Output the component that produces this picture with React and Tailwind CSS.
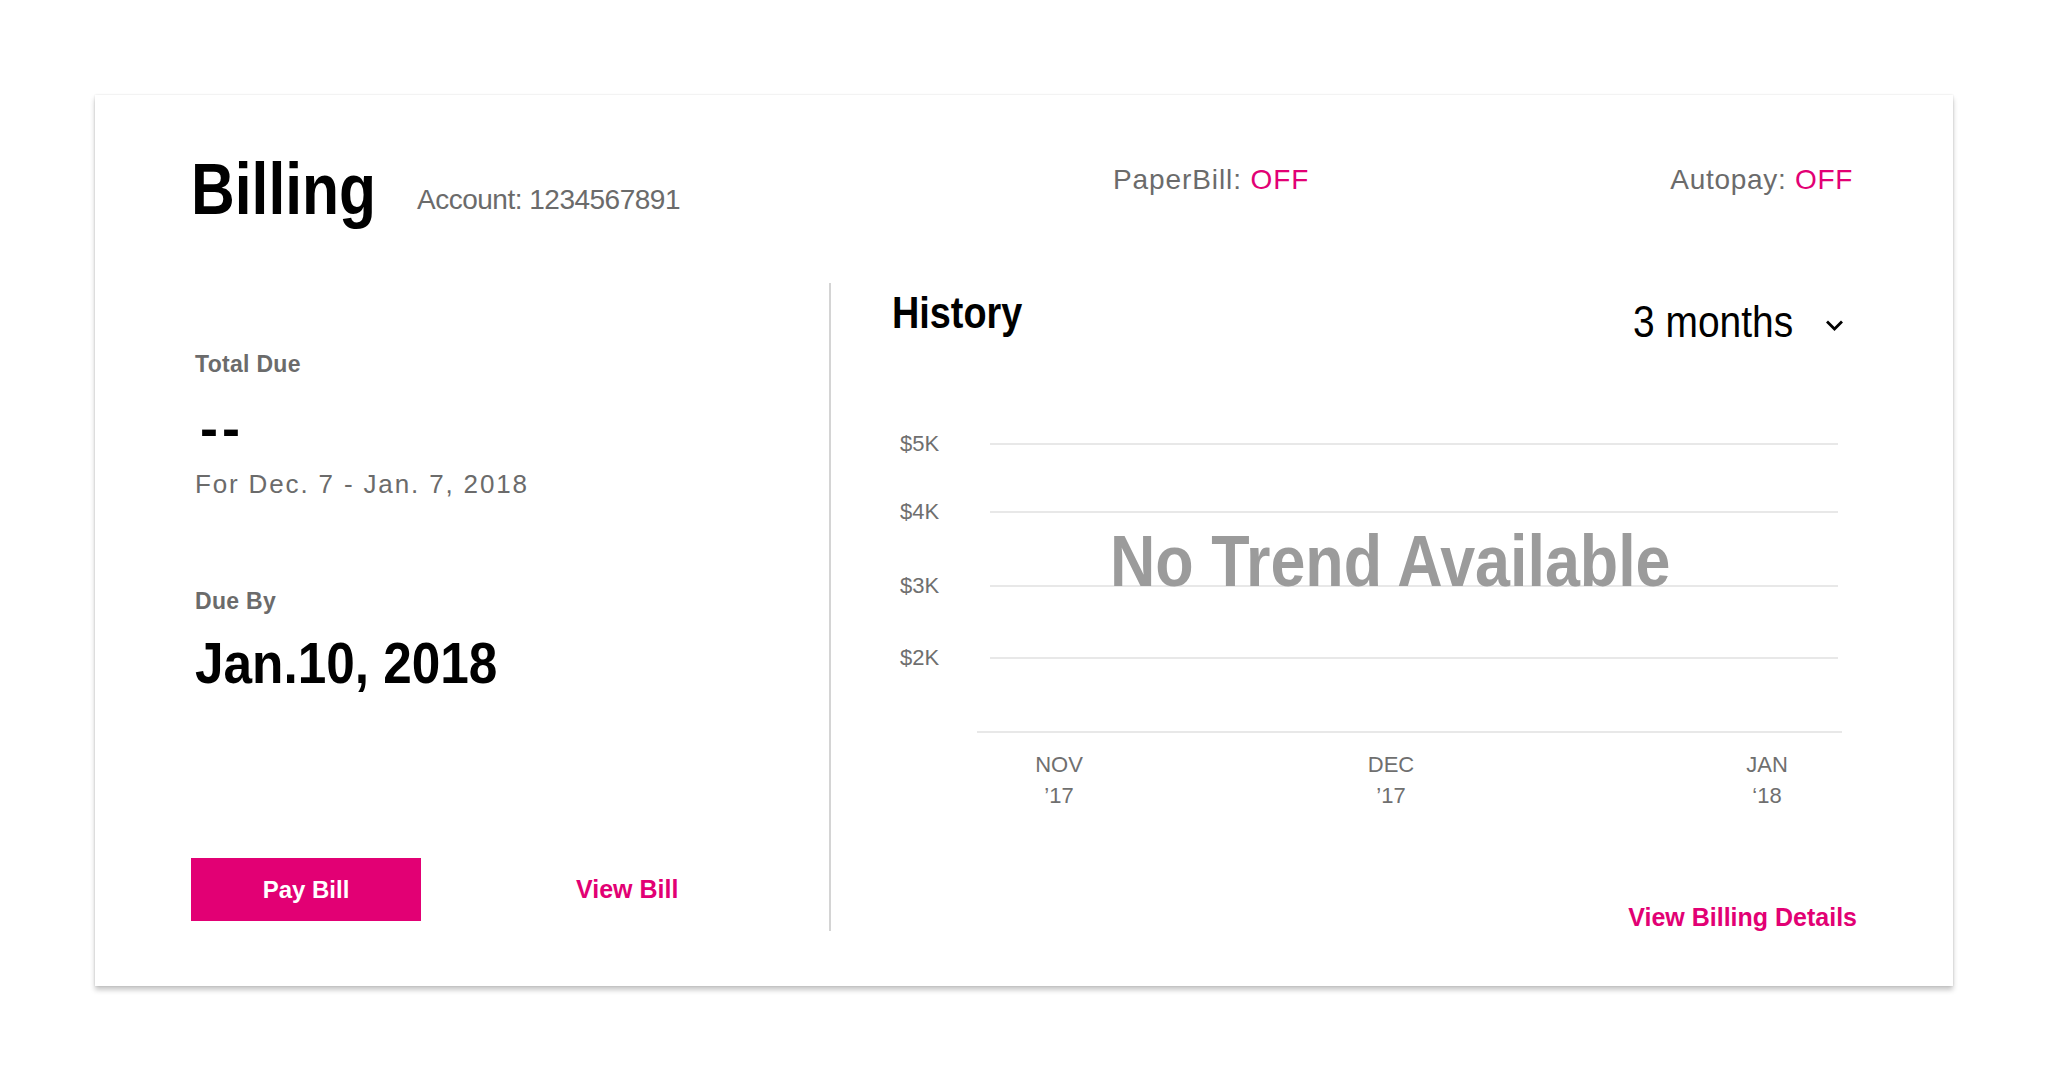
import React from "react";

const sans = "font-['Liberation_Sans',Arial,sans-serif]";

const gridRows = [
  { label: "$5K", mt: "mt-0" },
  { label: "$4K", mt: "mt-[46px]" },
  { label: "$3K", mt: "mt-[52px]" },
  { label: "$2K", mt: "mt-[50px]" },
];

const months = [
  { name: "NOV", year: "’17", ml: "ml-[32px]" },
  { name: "DEC", year: "’17", ml: "ml-[232px]" },
  { name: "JAN", year: "‘18", ml: "ml-[276px]" },
];

const ChevronDown = () => (
  <svg width="17" height="12" viewBox="0 0 17 12" fill="none">
    <path d="M2 2.5 L8.5 9 L15 2.5" stroke="#000" strokeWidth="2.8" strokeLinecap="square" />
  </svg>
);

const App = () => {
  return (
    <div className={`w-full min-h-screen bg-white pt-[95px] px-[95px] ${sans}`}>
      <div className="bg-white h-[891px] pt-[57px] pl-[96px] pr-[96px] shadow-[0_0_2px_rgba(0,0,0,0.12),0_4px_5px_rgba(0,0,0,0.22)]">
        {/* header */}
        <div className="flex items-start h-[73px]">
          <div className="flex items-start w-[922px] shrink-0">
            <h1 className="origin-left scale-x-[0.83] font-bold text-[73px] leading-none text-black">Billing</h1>
            <p className="ml-[3px] mt-[34px] text-[28px] leading-none tracking-[-0.5px] text-[#6b6b6b]">
              Account: 1234567891
            </p>
          </div>
          <p className="mt-[14px] text-[28px] leading-none tracking-[0.9px] text-[#6b6b6b]">
            PaperBill: <span className="text-[#e20074]">OFF</span>
          </p>
          <p className="ml-auto mr-[4px] mt-[14px] text-[28px] leading-none tracking-[0.7px] text-[#6b6b6b]">
            Autopay: <span className="text-[#e20074]">OFF</span>
          </p>
        </div>

        {/* body */}
        <div className="flex mt-[58px] h-[648px]">
          {/* left column */}
          <div className="w-[640px] shrink-0 border-r-2 border-[#d4d4d4] flex flex-col">
            <div className="pl-[4px] flex flex-col">
              <p className="mt-[70px] text-[23px] leading-none font-bold tracking-[0.3px] text-[#6b6b6b]">Total Due</p>
              <p className="mt-[25px] ml-[5px] text-[54px] leading-none font-bold tracking-[4px] text-black">--</p>
              <p className="mt-[16px] text-[26px] leading-none tracking-[1.85px] text-[#6b6b6b]">
                For Dec. 7 - Jan. 7, 2018
              </p>
              <p className="mt-[93px] text-[23px] leading-none font-bold tracking-[0.3px] text-[#6b6b6b]">Due By</p>
              <p className="origin-left scale-x-[0.9] mt-[22px] text-[57px] leading-none font-bold text-black whitespace-nowrap">
                Jan.10, 2018
              </p>
            </div>
            <div className="mt-auto mb-[10px] flex items-center">
              <button className="w-[230px] h-[63px] bg-[#e20074] text-white text-[24px] font-bold">
                Pay Bill
              </button>
              <a href="#" className="ml-[155px] text-[25px] font-bold leading-none text-[#e20074]">
                View Bill
              </a>
            </div>
          </div>

          {/* right column */}
          <div className="flex-1 min-w-0 pl-[61px] flex flex-col">
            <div className="flex items-start justify-between">
              <h2 className="origin-left scale-x-[0.84] mt-[7px] text-[45px] leading-none font-bold text-black">
                History
              </h2>
              <div className="mt-[16px] mr-[14px] flex items-center">
                <span className="origin-left scale-x-[0.865] text-[45px] leading-none text-black whitespace-nowrap">
                  3 months
                </span>
                <span className="ml-[8px] mt-[8px]">
                  <ChevronDown />
                </span>
              </div>
            </div>

            {/* chart */}
            <div className="relative mt-[89px] ml-[8px]">
              {gridRows.map((row) => (
                <div key={row.label} className={`flex items-center h-[22px] ${row.mt}`}>
                  <span className="w-[90px] shrink-0 text-[22px] leading-none text-[#6f6f6f]">{row.label}</span>
                  <div className="flex-1 h-[2px] bg-[#e8e8e8] mr-[19px]" />
                </div>
              ))}
              <div className="mt-[62px] ml-[77px] mr-[15px] h-[2px] bg-[#e8e8e8]" />
              <div className="mt-[16px] ml-[77px] flex text-[22px] leading-[31px] text-[#6f6f6f] text-center">
                {months.map((m) => (
                  <div key={m.name} className={`w-[100px] shrink-0 ${m.ml}`}>
                    {m.name}
                    <br />
                    {m.year}
                  </div>
                ))}
              </div>
              <p className="absolute left-[210px] top-[91px] origin-left scale-x-[0.86] text-[73px] leading-none font-bold text-[#9b9b9b] whitespace-nowrap">
                No Trend Available
              </p>
            </div>

            <a
              href="#"
              className="mt-auto mb-[1px] self-end text-[25px] leading-none font-bold text-[#e20074]"
            >
              View Billing Details
            </a>
          </div>
        </div>
      </div>
    </div>
  );
};

export default App;
